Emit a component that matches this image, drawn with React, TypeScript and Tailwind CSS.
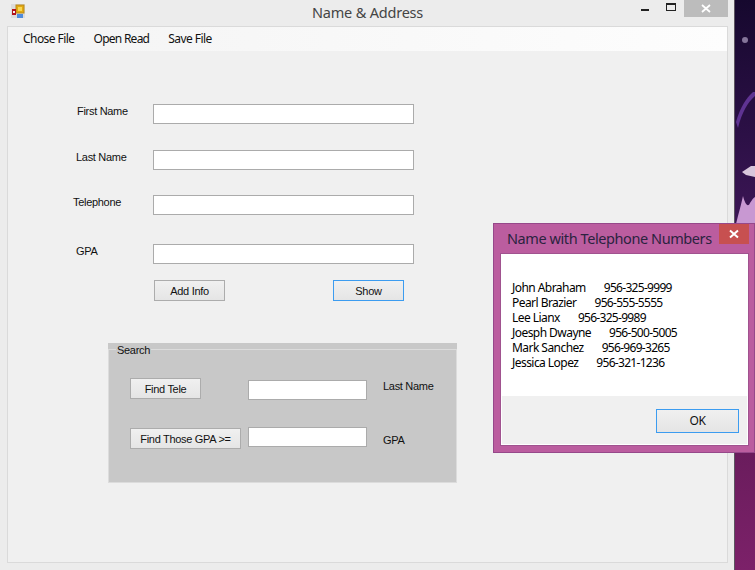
const people = [
  { name: "John Abraham", phone: "956-325-9999" },
  { name: "Pearl Brazier", phone: "956-555-5555" },
  { name: "Lee Lianx", phone: "956-325-9989" },
  { name: "Joesph Dwayne", phone: "956-500-5005" },
  { name: "Mark Sanchez", phone: "956-969-3265" },
  { name: "Jessica Lopez", phone: "956-321-1236" },
];

const fields = [
  { label: "First Name", pad: "pl-[69px]", gap: "mt-[53px]" },
  { label: "Last Name", pad: "pl-[68px]", gap: "mt-[26px]" },
  { label: "Telephone", pad: "pl-[65px]", gap: "mt-[25px]" },
  { label: "GPA", pad: "pl-[68px]", gap: "mt-[29px]" },
];

function WinButton({ label, className = "" }: { label: string; className?: string }) {
  return (
    <button className={`h-[21px] shrink-0 border bg-gradient-to-b from-[#f0f0f0] to-[#e5e5e5] text-center leading-[18px] ${className}`}>
      {label}
    </button>
  );
}

function WinInput({ className = "" }: { className?: string }) {
  return <input className={`h-[20px] shrink-0 border border-[#ababab] bg-white ${className}`} />;
}

function AppIcon() {
  return (
    <svg width="14" height="14" viewBox="0 0 14 14" className="ml-[11px] mt-[4px] shrink-0">
      <rect width="14" height="14" fill="#dcdcdc" />
      <rect x="5" y="1" width="8" height="8" fill="#e3a90f" stroke="#b98a1c" />
      <rect x="7" y="3" width="4" height="4" fill="#f8d653" />
      <rect x="1" y="5" width="4" height="6" fill="#b3141c" />
      <rect x="2" y="7" width="2" height="2" fill="#f1f1f1" />
      <rect x="6" y="10" width="6" height="4" fill="#4f8bdc" />
    </svg>
  );
}

function Wallpaper() {
  return (
    <svg width="20" height="570" viewBox="0 0 20 570" className="shrink-0">
      <defs>
        <linearGradient id="top" x1="0" y1="0" x2="0" y2="1">
          <stop offset="0" stopColor="#16082e" />
          <stop offset="0.6" stopColor="#2c1046" />
          <stop offset="1" stopColor="#3d1656" />
        </linearGradient>
        <linearGradient id="bottom" x1="0" y1="0" x2="0" y2="1">
          <stop offset="0" stopColor="#471345" />
          <stop offset="1" stopColor="#7c2169" />
        </linearGradient>
      </defs>
      <rect width="20" height="225" fill="url(#top)" />
      <rect y="225" width="20" height="345" fill="url(#bottom)" />
      <circle cx="10" cy="40" r="3" fill="#85759a" />
      <path d="M1 122C5 108 11 98 18 92L20 92L20 96C13 102 7 112 3 128Z" fill="#5f3392" />
      <path d="M7 172L16 166L20 166L20 177L11 175Z" fill="#d9c6dc" />
      <path d="M1 224C4 212 6 205 8 196C10 204 13 208 15 203C17 200 18 198 20 197L20 224Z" fill="#c898d2" />
    </svg>
  );
}

function PhoneDialog() {
  return (
    <div className="absolute left-[493px] top-[223px] flex h-[230px] w-[262px] flex-col border border-[#96488a] bg-[#bb5d9f] font-['Noto_Sans',sans-serif] text-[12px]">
      <div className="flex h-[29px] shrink-0 items-start justify-between">
        <span className="ml-[13px] mt-[4px] text-[14.5px] leading-[20px] tracking-[-0.42px] text-[#2b2340]">Name with Telephone Numbers</span>
        <div className="mr-[5px] flex h-[20px] w-[30px] items-center justify-center bg-[#c75050]">
          <svg width="10" height="10" viewBox="0 0 10 10">
            <path d="M1 1.5L9 8.5M9 1.5L1 8.5" stroke="#fff" strokeWidth="2" />
          </svg>
        </div>
      </div>
      <div className="ml-[6px] flex h-[193px] w-[249px] flex-col border border-[#a0528f] bg-white">
        <div className="flex h-[142px] flex-col pl-[11px] pt-[26px]">
          {people.map((p) => (
            <div key={p.name} className="flex h-[15px] items-center gap-[18px] whitespace-nowrap leading-[15px] text-black">
              <span className="tracking-[-0.55px]">{p.name}</span>
              <span className="tracking-[-0.7px]">{p.phone}</span>
            </div>
          ))}
        </div>
        <div className="mx-[1px] mb-[1px] flex flex-1 items-start justify-end bg-[#f0f0f0] pr-[8px] pt-[13px]">
          <WinButton label="OK" className="h-[24px] w-[83px] border-[#3c9cf0]" />
        </div>
      </div>
    </div>
  );
}

export default function App() {
  return (
    <div className="relative flex h-[570px] w-[755px] overflow-hidden font-['Liberation_Sans',sans-serif] text-[11px] tracking-[-0.3px] text-[#111]">
      <div className="flex h-[570px] w-[735px] shrink-0 flex-col border-r border-[#5c5560] bg-[#ececec]">
        <div className="relative flex h-[26px] shrink-0">
          <AppIcon />
          <span className="absolute left-[312px] top-[2px] font-['Noto_Sans',sans-serif] text-[14.5px] leading-[20px] tracking-[-0.2px] text-[#444]">Name &amp; Address</span>
          <div className="ml-auto mr-[6px] flex items-start">
            <div className="mr-[17px] mt-[9px] h-[2px] w-[8px] bg-[#222]" />
            <div className="mr-[8px] mt-[3px] h-[8px] w-[10px] border border-t-2 border-[#222] bg-[#ececec]" />
            <div className="flex h-[17px] w-[44px] items-center justify-center bg-[#bcbcbc]">
              <svg width="10" height="9" viewBox="0 0 10 9">
                <path d="M1 1L9 8M9 1L1 8" stroke="#fff" strokeWidth="1.8" />
              </svg>
            </div>
          </div>
        </div>

        <div className="ml-[7px] flex h-[537px] w-[721px] flex-col border border-[#dadada] bg-[#f0f0f0]">
          <div className="flex h-[24px] shrink-0 items-center gap-[19px] bg-gradient-to-r from-[#f4f4f4] to-[#fdfdfd] pl-[15px] font-['Noto_Sans',sans-serif] text-[12px] tracking-[-0.55px] text-[#111]">
            <span>Chose File</span>
            <span className="tracking-[-0.75px]">Open Read</span>
            <span>Save File</span>
          </div>

          {fields.map((f) => (
            <div key={f.label} className={`grid h-[20px] grid-cols-[145px_261px] ${f.gap}`}>
              <label className={`block leading-[14px] ${f.pad}`}>{f.label}</label>
              <WinInput />
            </div>
          ))}

          <div className="ml-[146px] mt-[16px] flex gap-[108px]">
            <WinButton label="Add Info" className="w-[71px] border-[#acacac]" />
            <WinButton label="Show" className="w-[71px] border-[#3c9cf0]" />
          </div>

          <div className="relative ml-[100px] mt-[42px] h-[140px] w-[349px] bg-[#c8c8c8] pt-[6px]">
            <span className="absolute left-[8px] top-0 bg-[#c8c8c8] px-px leading-[14px]">Search</span>
            <div className="h-[134px] border border-[#dcdcdc] pl-[21px] pt-[28px]">
              <div className="flex items-start">
                <WinButton label="Find Tele" className="w-[71px] border-[#acacac]" />
                <WinInput className="ml-[47px] mt-[2px] w-[119px]" />
                <span className="ml-[16px] mt-[1px] leading-[14px]">Last Name</span>
              </div>
              <div className="mt-[27px] flex items-start">
                <WinButton label="Find Those GPA >=" className="mt-px w-[111px] border-[#acacac]" />
                <WinInput className="ml-[7px] w-[119px]" />
                <span className="ml-[16px] mt-[6px] leading-[14px]">GPA</span>
              </div>
            </div>
          </div>
        </div>
      </div>
      <Wallpaper />
      <PhoneDialog />
    </div>
  );
}
